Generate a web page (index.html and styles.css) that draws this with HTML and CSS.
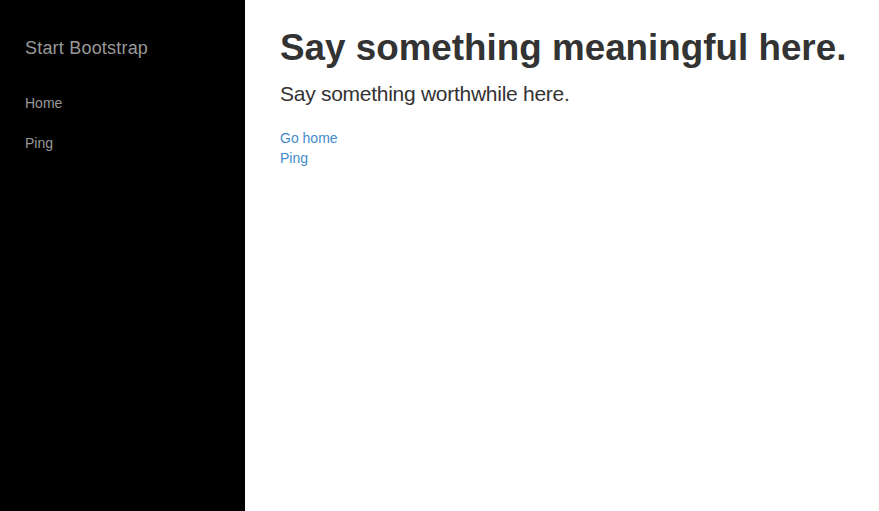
FILE: index.html
```html
<!DOCTYPE html>
<html lang="en">
<head>
<meta charset="utf-8">
<title>Simple Sidebar</title>
<link rel="stylesheet" href="styles.css">
</head>
<body>
<div class="wrapper">
  <nav class="sidebar">
    <div class="brand">Start Bootstrap</div>
    <ul class="nav">
      <li><a href="#">Home</a></li>
      <li><a href="#">Ping</a></li>
    </ul>
  </nav>
  <main class="content">
    <h1 class="title">Say something meaningful here.</h1>
    <p class="lead">Say something worthwhile here.</p>
    <div class="links">
      <a href="#">Go home</a>
      <a href="#">Ping</a>
    </div>
  </main>
</div>
</body>
</html>
```
FILE: styles.css
```css
html, body {
  margin: 0;
  padding: 0;
  height: 100%;
}
body {
  font-family: "Liberation Sans", Arial, Helvetica, sans-serif;
  font-size: 14px;
  line-height: 20px;
  color: #333;
  background: #fff;
}
.wrapper {
  display: flex;
  min-height: 100%;
}
.sidebar {
  width: 245px;
  flex: 0 0 245px;
  background: #000;
  padding-top: 18px;
  box-sizing: border-box;
}
.brand {
  height: 65px;
  line-height: 60px;
  font-size: 18px;
  color: #999;
  padding-left: 25px;
  letter-spacing: 0.2px;
}
.nav {
  list-style: none;
  margin: 0;
  padding: 0;
}
.nav li {
  line-height: 40px;
}
.nav a {
  display: block;
  padding-left: 25px;
  color: #999;
  text-decoration: none;
  font-size: 14px;
}
.content {
  flex: 1;
  padding: 28px 0 0 35px;
}
.title {
  margin: 0 0 11px;
  font-size: 36.8px;
  line-height: 1.1;
  font-weight: bold;
  color: #333;
}
.lead {
  margin: 0 0 19px;
  font-size: 21px;
  line-height: 1.4;
  font-weight: 300;
  color: #333;
  letter-spacing: -0.27px;
}
.links {
  display: flex;
  flex-direction: column;
  align-items: flex-start;
}
.links a {
  color: #428bca;
  text-decoration: none;
  line-height: 20px;
}
```
